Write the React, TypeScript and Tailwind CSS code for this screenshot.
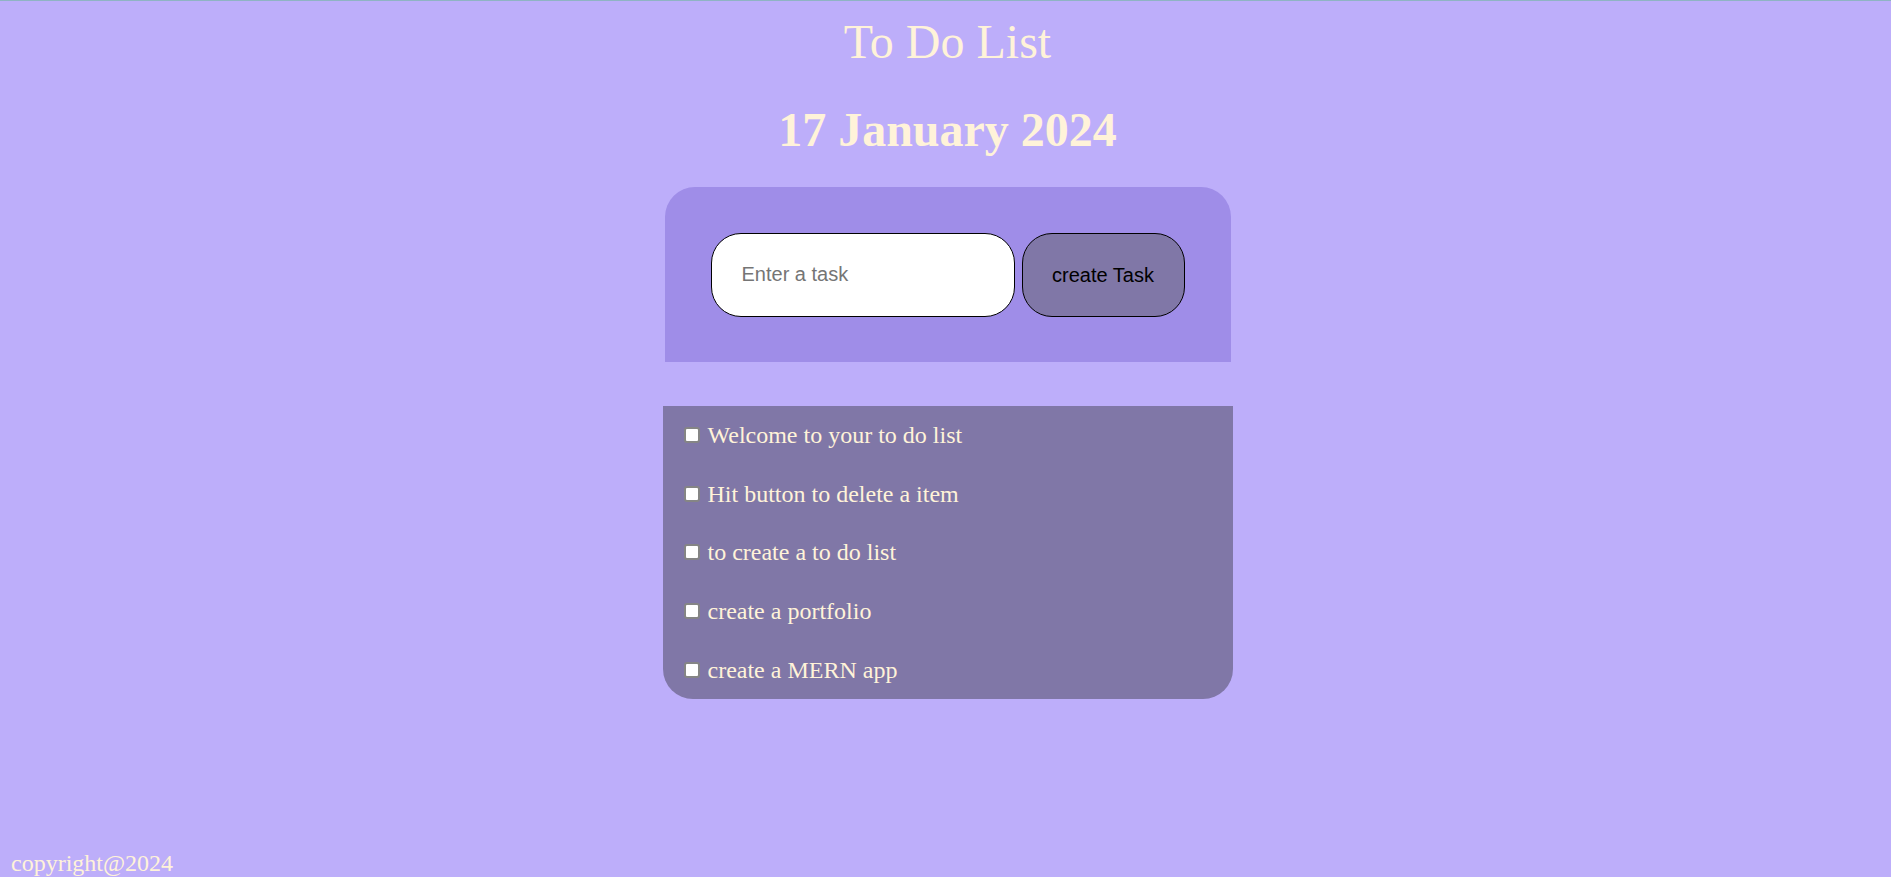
import React from "react";

const items = [
  "Welcome to your to do list",
  "Hit button to delete a item",
  "to create a to do list",
  "create a portfolio",
  "create a MERN app",
];

export default function App() {
  return (
    <div className="min-h-screen flex flex-col bg-[#bdaefa] border-t border-[#8fb3c3] font-['Liberation_Serif',serif] text-[#fff3d9]">
      <div className="flex flex-col pl-[4px]">
        <h1 className="text-center text-[48px] leading-[53px] font-normal mt-[14px]">To Do List</h1>
        <h2 className="text-center text-[48px] leading-[53px] font-bold mt-[35px]">17 January 2024</h2>
        <div className="mx-auto mt-[31px] w-[566px] h-[175px] bg-[#9f8de8] rounded-t-[30px] flex items-center justify-center gap-[7px]">
          <input
            type="text"
            placeholder="Enter a task"
            className="w-[304px] h-[84px] bg-white border border-black rounded-[30px] pl-[30px] text-[20px] text-black placeholder:text-[#757575] font-['Liberation_Sans',sans-serif] outline-none"
          />
          <button className="w-[163px] h-[84px] bg-[#8077a7] border border-black rounded-[30px] text-[20px] text-black font-['Liberation_Sans',sans-serif]">
            create Task
          </button>
        </div>
        <ul className="mx-auto mt-[44px] w-[570px] bg-[#8077a7] rounded-b-[30px]">
          {items.map((t) => (
            <li key={t} className="h-[58.6px] flex items-center pl-[21px] text-[24px]">
              <span className="w-[16px] h-[16px] bg-white border-2 border-[#858585] rounded-[3px] mr-[8px] shrink-0" />
              <span>{t}</span>
            </li>
          ))}
        </ul>
      </div>
      <footer className="mt-auto pl-[11px] text-[24px] leading-[27px]">copyright@2024</footer>
    </div>
  );
}
